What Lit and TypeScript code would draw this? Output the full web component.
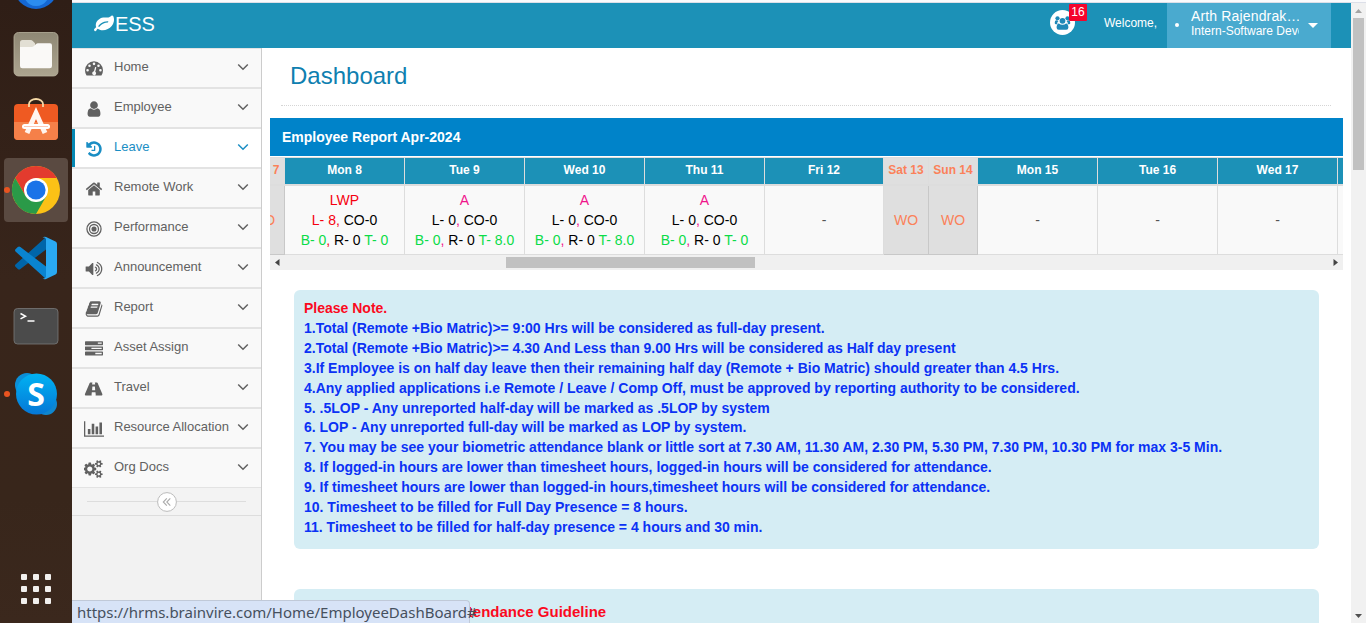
import { LitElement, html, css, svg, nothing } from "lit";
import { customElement } from "lit/decorators.js";
import { classMap } from "lit/directives/class-map.js";

const smallGear = (y: number) =>
  `M1856 ${y}v140q0 16-149 31-12 27-30 52 51 113 51 138 0 4-4 7-122 71-124 71-8 0-46-47t-52-68q-20 2-30 2t-30-2q-14 21-52 68t-46 47q-2 0-124-71-4-3-4-7 0-25 51-138-18-25-30-52-149-15-149-31v-140q0-16 149-31 13-29 30-52-51-113-51-138 0-4 4-7 4-2 35-20t59-34 30-16q8 0 46 46.5t52 67.5q20-2 30-2t30 2q51-71 92-112l6-2q4 0 124 70 4 3 4 7 0 25-51 138 17 23 30 52 149 15 149 31z`;

const ICONS: Record<string, { w: number; d: string }> = {
  gauge: {
    w: 1792,
    d: "M0 1024a896 896 0 0 1 1792 0q0 261-141 483-19 29-54 29H195q-35 0-54-29Q0 1286 0 1024zM256 896a128 128 0 1 0 0 256a128 128 0 1 0 0-256zM448 448a128 128 0 1 0 0 256a128 128 0 1 0 0-256zM896 256a128 128 0 1 0 0 256a128 128 0 1 0 0-256zM1344 448a128 128 0 1 0 0 256a128 128 0 1 0 0-256zM1536 896a128 128 0 1 0 0 256a128 128 0 1 0 0-256zM1073 698q-26-6-48 8t-29 39l-101 382q-60 5-107 43t-63 98q-20 77 20 146t117 89 146-20 89-117q16-60-6-117t-72-91l101-382q6-26-8-48t-39-30z",
  },
  user: {
    w: 1792,
    d: "M1536 1399q0 109-62.5 187t-150.5 78h-854q-88 0-150.5-78t-62.5-187q0-85 8.5-160.5t31.5-152 58.5-131 94-89 134.5-34.5q131 128 313 128t313-128q76 0 134.5 34.5t94 89 58.5 131 31.5 152 8.5 160.5zm-256-887q0 159-112.5 271.5t-271.5 112.5-271.5-112.5-112.5-271.5 112.5-271.5 271.5-112.5 271.5 112.5 112.5 271.5z",
  },
  history: {
    w: 1792,
    d: "M1664 896q0 156-61 298t-164 245-245 164-298 61q-172 0-327-72.5t-264-204.5q-7-10-6.5-22.5t8.5-20.5l137-138q10-9 25-9 16 2 23 12 73 95 179 147t225 52q104 0 198.5-40.5t163.5-109.5 109.5-163.5 40.5-198.5-40.5-198.5-109.5-163.5-163.5-109.5-198.5-40.5q-98 0-188 35.5t-160 101.5l137 138q31 30 14 69-17 40-59 40h-448q-26 0-45-19t-19-45v-448q0-42 40-59 39-17 69 14l130 129q107-101 244.5-156.5t284.5-55.5q156 0 298 61t245 164 164 245 61 298zm-640-288v448q0 14-9 23t-23 9h-320q-14 0-23-9t-9-23v-64q0-14 9-23t23-9h224v-352q0-14 9-23t23-9h64q14 0 23 9t9 23z",
  },
  home: {
    w: 1792,
    d: "M1472 992v480q0 26-19 45t-45 19h-384v-384h-256v384h-384q-26 0-45-19t-19-45v-480q0-1 .5-3t.5-3l575-474 575 474q1 2 1 6zm223-69l-62 74q-8 9-21 11h-3q-13 0-21-7l-692-577-692 577q-12 8-24 7-13-2-21-11l-62-74q-8-10-7-23.5t11-21.5l719-599q32-26 76-26t76 26l244 204v-195q0-14 9-23t23-9h192q14 0 23 9t9 23v408l219 182q10 8 11 21.5t-7 23.5z",
  },
  bullseye: {
    w: 1792,
    d: "M896 128a768 768 0 1 0 0 1536a768 768 0 1 0 0-1536zM896 256a640 640 0 1 1 0 1280a640 640 0 1 1 0-1280zM896 384a512 512 0 1 0 0 1024a512 512 0 1 0 0-1024zM896 512a384 384 0 1 1 0 768a384 384 0 1 1 0-768zM896 640a256 256 0 1 0 0 512a256 256 0 1 0 0-512z",
  },
  volume: {
    w: 1792,
    d: "M832 352v1088q0 26-19 45t-45 19-45-19l-333-333h-262q-26 0-45-19t-19-45v-384q0-26 19-45t45-19h262l333-333q19-19 45-19t45 19 19 45zm384 544q0 76-42.5 141.5t-112.5 93.5q-10 5-25 5-26 0-45-18.5t-19-45.5q0-21 12-35.5t29-25 34-23 29-36 12-56.5-12-56.5-29-36-34-23-29-25-12-35.5q0-27 19-45.5t45-18.5q15 0 25 5 70 27 112.5 93t42.5 142zm256 0q0 153-85 282.5t-225 188.5q-13 5-25 5-27 0-46-19t-19-45q0-39 39-59 56-29 76-44 74-54 115.5-135.5t41.5-173.5-41.5-173.5-115.5-135.5q-20-15-76-44-39-20-39-59 0-26 19-45t45-19q13 0 26 5 140 59 225 188.5t85 282.5zm256 0q0 230-127 422.5t-338 283.5q-13 5-26 5-26 0-45-19t-19-45q0-36 39-59 7-4 22.5-10.5t22.5-10.5q46-25 82-51 123-91 192-227t69-289-69-289-192-227q-36-26-82-51-7-4-22.5-10.5t-22.5-10.5q-39-23-39-59 0-26 19-45t45-19q13 0 26 5 211 91 338 283.5t127 422.5z",
  },
  book: {
    w: 1792,
    d: "M1703 478q40 57 18 129l-275 906q-19 64-76.5 107.5t-122.5 43.5h-923q-77 0-148.5-53.5t-99.5-131.5q-24-67-2-127 0-4 3-27t4-37q1-8-3-21.5t-3-19.5q2-11 8-21t16.5-23.5 16.5-23.5q23-38 45-91.5t30-91.5q3-10 .5-30t-.5-28q3-11 17-28t17-23q21-36 42-92t25-90q1-9-2.5-32t.5-28q4-13 22-30.5t22-22.5q19-26 42.5-84.5t27.5-96.5q1-8-3-25.5t-2-26.5q2-8 9-18t18-23 17-21q8-12 16.5-30.5t15-35 16-36 19.5-32 26.5-23.5 36-11.5 47.5 5.5l-1 3q38-9 51-9h761q74 0 114 56t18 130l-274 906q-36 119-71.5 153.5t-128.5 34.5h-869q-27 0-38 15-11 16-1 43 24 70 144 70h923q29 0 56-15.5t35-41.5l300-987q7-22 5-57 38 15 59 43zm-1064 2q-4 13 2 22.5t20 9.5h608q13 0 25.5-9.5t16.5-22.5l21-64q4-13-2-22.5t-20-9.5h-608q-13 0-25.5 9.5t-16.5 22.5zm-83 256q-4 13 2 22.5t20 9.5h608q13 0 25.5-9.5t16.5-22.5l21-64q4-13-2-22.5t-20-9.5h-608q-13 0-25.5 9.5t-16.5 22.5z",
  },
  tasks: {
    w: 1792,
    d: "M1024 1408h640v-128h-640v128zm-384-512h1024v-128h-1024v128zm640-512h384v-128h-384v128zm512 832v256q0 26-19 45t-45 19h-1664q-26 0-45-19t-19-45v-256q0-26 19-45t45-19h1664q26 0 45 19t19 45zm0-512v256q0 26-19 45t-45 19h-1664q-26 0-45-19t-19-45v-256q0-26 19-45t45-19h1664q26 0 45 19t19 45zm0-512v256q0 26-19 45t-45 19h-1664q-26 0-45-19t-19-45v-256q0-26 19-45t45-19h1664q26 0 45 19t19 45z",
  },
  road: {
    w: 1920,
    d: "M625 256h230q-13 0-22 9t-10 22l-12 128q-1 14 8 23t22 9h238q13 0 22-9t8-23l-12-128q-1-13-10-22t-22-9h230q36 0 60 36l470 1100q35 144-54 144h-634q13 0 22-9t8-23l-20-256q-1-13-11-22t-23-10H807q-13 0-23 10t-11 22l-20 256q-1 14 8 23t22 9H149q-89 0-54-144L565 292q24-36 60-36zM1111 1001l-24-324q-1-13-11-22t-23-9H867q-13 0-23 9t-11 22l-24 324q-1 28 29 28h244q30 0 29-28z",
  },
  chart: {
    w: 2048,
    d: "M640 896v512h-256v-512h256zm384-512v1024h-256v-1024h256zm1024 1152v128h-2048v-1536h128v1408h1920zm-640-896v768h-256v-768h256zm384-384v1152h-256v-1152h256z",
  },
  cogs: {
    w: 1920,
    d:
      "M832 896q0-106-75-181t-181-75-181 75-75 181 75 181 181 75 181-75 75-181zm768 512q0-52-38-90t-90-38-90 38-38 90q0 53 37.5 90.5t90.5 37.5 90.5-37.5 37.5-90.5zm0-1024q0-52-38-90t-90-38-90 38-38 90q0 53 37.5 90.5t90.5 37.5 90.5-37.5 37.5-90.5zm-384 421v185q0 10-7 19.5t-16 10.5l-155 24q-11 35-32 76 34 48 90 115 7 11 7 20 0 12-7 19-23 30-82.5 89.5t-78.5 59.5q-11 0-21-7l-115-90q-37 19-77 31-11 108-23 155-7 24-30 24h-186q-11 0-20-7.5t-10-17.5l-23-153q-34-10-75-31l-118 89q-7 7-20 7-11 0-21-8-144-133-144-160 0-9 7-19 10-14 41-53t47-61q-23-44-35-82l-152-24q-10-1-17-9.5t-7-19.5v-185q0-10 7-19.5t16-10.5l155-24q11-35 32-76-34-48-90-115-7-11-7-20 0-12 7-20 22-30 82-89t79-59q11 0 21 7l115 90q34-18 77-32 11-108 23-154 7-24 30-24h186q11 0 20 7.5t10 17.5l23 153q34 10 75 31l118-89q8-7 20-7 11 0 21 8 144 133 144 160 0 8-7 19-12 16-42 54t-45 60q23 48 34 82l152 23q10 2 17 10.5t7 19.5z" +
      smallGear(1338) +
      smallGear(314),
  },
  leaf: {
    w: 1792,
    d: "M1280 704q0-26-19-45t-45-19q-172 0-318 49.5t-259.5 134-235.5 219.5q-19 21-19 45 0 26 19 45t45 19q24 0 45-19 27-24 74-71t67-66q137-124 268.5-176t313.5-52q26 0 45-19t19-45zm512-198q0 95-20 193-46 224-184.5 383t-357.5 268q-214 108-438 108-148 0-286-47-15-5-88-42t-96-37q-16 0-39.5 32t-45 70-52.5 70-60 32q-43 0-63.5-17.5t-45.5-59.5q-2-4-6-11t-5.5-10-3-9.5-1.5-13.5q0-35 31-73.5t68-65.5 68-56 31-48q0-4-14-38t-16-44q-9-51-9-104 0-115 43.5-220t119-184.5 170.5-139 204-95.5q55-18 145-25.5t179.5-9 178.5-6 163.5-24 113.5-56.5l29.5-29.5 29.5-28 27-20 36.5-16 43.5-4.5q39 0 70.5 46t47.5 112 24 124 8 96z",
  },
};

const icon = (name: string, size: number) => {
  const i = ICONS[name];
  return html`<svg
    width=${(size * i.w) / 1792}
    height=${size}
    viewBox="0 0 ${i.w} 1792"
    fill="currentColor"
    fill-rule="evenodd"
  >
    <path d=${i.d}></path>
  </svg>`;
};

const DOCK = [
  {
    on: false,
    dot: false,
    art: svg`<circle cx="32" cy="33" r="22" fill="#1467d3"/><path d="M18 38q14 10 28 2q-4 12-14 12t-14-14z" fill="#2b8df0"/>`,
  },
  {
    on: false,
    dot: false,
    art: svg`<rect x="10" y="10.500" width="44" height="43.500" rx="4.500" fill="url(#files)" stroke="#b9b29e" stroke-width=".8"/>
      <path d="M16 20.500q0-2.500 2.500-2.500h8q1.500 0 2.500 1.200l2 2v6H16z" fill="#e2dfd4"/>
      <path d="M16 25h11.500q1.500 0 2.500-1l1.800-1.800q1-1 2.200-1h12q2 0 2 2.300V44q0 2.300-2.300 2.300H18.300Q16 46.300 16 44z" fill="#faf9f7"/>`,
  },
  {
    on: false,
    dot: false,
    art: svg`<rect x="10" y="14" width="44" height="36" rx="4" fill="#ef5a22"/>
      <path d="M10 32h44v14q0 4-4 4H14q-4 0-4-4z" fill="#f58049"/>
      <path d="M25 17v-3a7 5 0 0 1 14 0v3" fill="none" stroke="#f6d9a6" stroke-width="1.800"/>
      <path d="M23 43l9-20l9 20" fill="none" stroke="#fff4ef" stroke-width="5"/>
      <rect x="18" y="34" width="28" height="5" rx="2.500" fill="#fff"/><path d="M20 36.500h24" stroke="#ffc9b5" stroke-width="1"/>`,
  },
  {
    on: true,
    dot: true,
    art: svg`<circle cx="32" cy="32" r="24" fill="#fbc116"/>
      <path d="M11.200 20A24 24 0 0 1 52.800 20H32L21.600 38z" fill="#e33b2e"/>
      <path d="M11.200 20A24 24 0 0 0 32 56L42.400 38L32 44L21.600 38z" fill="#2a9a48"/>
      <circle cx="32" cy="32" r="12" fill="#fff"/><circle cx="32" cy="32" r="9.600" fill="#1a73e8"/>`,
  },
  {
    on: false,
    dot: false,
    art: svg`<path d="M42 11L11.500 38.500q-1 1.200 0 2.200l2.300 2.200q1.300 1 2.600 0L42 23.500z" fill="#0065a9"/>
      <path d="M42 53L11.500 25.500q-1-1.200 0-2.200l2.300-2.200q1.300-1 2.600 0L42 40.500z" fill="#0a84d0"/>
      <path d="M42 11l9.500 4.500q1.500.8 1.500 2.500v28q0 1.700-1.500 2.500L42 53q-2 .8-3.500-.8Q41 53 42 51V13q-1-2-3.500-1.200Q40 10.200 42 11z" fill="#2aa9f2"/>`,
  },
  {
    on: false,
    dot: false,
    art: svg`<rect x="10" y="14.500" width="44" height="35.500" rx="3.500" fill="#4b4b4b" stroke="#7a7a7a" stroke-width=".8"/>
      <path d="M16.500 19.500l5 2.700l-5 2.700M23.500 27h7" fill="none" stroke="#fff" stroke-width="1.500"/>`,
  },
  {
    on: false,
    dot: true,
    art: svg`<circle cx="23" cy="23" r="12" fill="#0b8fd8"/><circle cx="42" cy="42" r="11" fill="#0f86cf"/>
      <circle cx="32.500" cy="32" r="20.500" fill="url(#skype)"/>
      <text x="32" y="43.500" text-anchor="middle" font-family="Open Sans, sans-serif" font-weight="700" font-size="32" fill="#fff">S</text>`,
  },
];

const MENU: [string, string][] = [
  ["gauge", "Home"],
  ["user", "Employee"],
  ["history", "Leave"],
  ["home", "Remote Work"],
  ["bullseye", "Performance"],
  ["volume", "Announcement"],
  ["book", "Report"],
  ["tasks", "Asset Assign"],
  ["road", "Travel"],
  ["chart", "Resource Allocation"],
  ["cogs", "Org Docs"],
];

interface Day {
  label: string;
  width: number;
  off?: boolean;
  code?: string;
  leave?: string;
  total?: string;
}

const DAYS: Day[] = [
  { label: "Sun 7", width: 43, off: true },
  { label: "Mon 8", width: 120, code: "LWP", leave: "8", total: "0" },
  { label: "Tue 9", width: 120, code: "A", leave: "0", total: "8.0" },
  { label: "Wed 10", width: 120, code: "A", leave: "0", total: "8.0" },
  { label: "Thu 11", width: 120, code: "A", leave: "0", total: "0" },
  { label: "Fri 12", width: 119 },
  { label: "Sat 13", width: 45, off: true },
  { label: "Sun 14", width: 49, off: true },
  { label: "Mon 15", width: 120 },
  { label: "Tue 16", width: 120 },
  { label: "Wed 17", width: 120 },
  { label: "Thu 18", width: 120 },
];

const NOTES = [
  "1.Total (Remote +Bio Matric)>= 9:00 Hrs will be considered as full-day present.",
  "2.Total (Remote +Bio Matric)>= 4.30 And Less than 9.00 Hrs will be considered as Half day present",
  "3.If Employee is on half day leave then their remaining half day (Remote + Bio Matric) should greater than 4.5 Hrs.",
  "4.Any applied applications i.e Remote / Leave / Comp Off, must be approved by reporting authority to be considered.",
  "5. .5LOP - Any unreported half-day will be marked as .5LOP by system",
  "6. LOP - Any unreported full-day will be marked as LOP by system.",
  "7. You may be see your biometric attendance blank or little sort at 7.30 AM, 11.30 AM, 2.30 PM, 5.30 PM, 7.30 PM, 10.30 PM for max 3-5 Min.",
  "8. If logged-in hours are lower than timesheet hours, logged-in hours will be considered for attendance.",
  "9. If timesheet hours are lower than logged-in hours,timesheet hours will be considered for attendance.",
  "10. Timesheet to be filled for Full Day Presence = 8 hours.",
  "11. Timesheet to be filled for half-day presence = 4 hours and 30 min.",
];

@customElement("desktop-dock")
class DesktopDock extends LitElement {
  static styles = css`
    :host {
      display: flex;
      flex-direction: column;
      width: 72px;
      height: 623px;
      overflow: hidden;
      background: linear-gradient(#2f1e16, #38251b 45%, #38261b 80%, #3b281d);
    }
    .apps {
      display: flex;
      flex-direction: column;
      gap: 4px;
      margin: -46px 4px 0;
    }
    .app {
      position: relative;
      height: 64px;
      border-radius: 4px;
    }
    .on {
      background: #5a4a41;
    }
    .dot {
      position: absolute;
      left: 0;
      top: 29px;
      width: 6px;
      height: 6px;
      border-radius: 3px;
      background: #e95420;
    }
    .grid {
      display: grid;
      grid-template-columns: repeat(3, 6px);
      gap: 6px;
      margin: auto 21px 19px;
    }
    .grid i {
      height: 6px;
      border-radius: 1px;
      background: #f2f0ee;
    }
    svg {
      display: block;
    }
  `;
  render() {
    return html`
      <div class="apps">
        ${DOCK.map(
          (a) => html`<div class=${classMap({ app: true, on: a.on })}>
            <svg width="64" height="64" viewBox="0 0 64 64">
              <defs>
                <linearGradient id="files" x1="0" y1="0" x2="0" y2="1">
                  <stop offset="0" stop-color="#8f8875" />
                  <stop offset="1" stop-color="#aca48f" />
                </linearGradient>
                <linearGradient id="skype" x1="0" y1="0" x2="0" y2="1">
                  <stop offset="0" stop-color="#00b2f3" />
                  <stop offset="1" stop-color="#0577d6" />
                </linearGradient>
              </defs>
              ${a.art}
            </svg>
            ${a.dot ? html`<span class="dot"></span>` : nothing}
          </div>`
        )}
      </div>
      <div class="grid">${Array.from({ length: 9 }, () => html`<i></i>`)}</div>
    `;
  }
}

@customElement("top-bar")
class TopBar extends LitElement {
  static styles = css`
    :host {
      display: flex;
      height: 45px;
      background: #1c91b7;
      color: #fff;
      font: 12px "Liberation Sans", Arial, sans-serif;
    }
    .brand {
      display: flex;
      align-items: center;
      padding: 0 0 3px 22px;
      font-size: 20px;
      letter-spacing: -0.1px;
    }
    .brand span {
      margin-left: 1px;
    }
    .people {
      position: relative;
      width: 25px;
      height: 25px;
      margin: 7px 29px 0 auto;
      border-radius: 50%;
      background: #fff;
      color: #1e88b8;
    }
    .badge {
      position: absolute;
      left: 19px;
      top: -6px;
      width: 18px;
      height: 17px;
      background: #f4052c;
      color: #fff;
      line-height: 16px;
      text-align: center;
      border-radius: 1px;
    }
    .welcome {
      line-height: 40px;
      width: 63px;
    }
    .account {
      display: flex;
      align-items: center;
      width: 164px;
      margin-right: 20px;
      background: #4aaacf;
    }
    .bullet {
      width: 4px;
      height: 4px;
      margin: 0 12px 2px 8px;
      border-radius: 2px;
      background: #fff;
    }
    .who {
      width: 108px;
      height: 45px;
      padding-top: 11px;
      box-sizing: border-box;
      overflow: hidden;
      white-space: nowrap;
    }
    .name {
      font-size: 14px;
      line-height: 14px;
      margin-top: -5px;
      padding-bottom: 1px;
      letter-spacing: 0.15px;
    }
    .role {
      line-height: 14px;
    }
    .caret {
      margin: 0 0 1px 9px;
    }
    svg {
      display: block;
    }
  `;
  render() {
    return html`
      <div class="brand">${icon("leaf", 20)}<span>ESS</span></div>
      <div class="people">
        <svg width="25" height="25" viewBox="0 0 25 25" fill="currentColor">
          <circle cx="7.500" cy="8.300" r="2.100" />
          <circle cx="17.500" cy="8.300" r="2.100" />
          <path d="M8.500 11q-1.500 1-1.300 3.300H6Q4.700 14.300 4.700 13q0-3 1.600-2.800zM16.500 11q1.500 1 1.300 3.300H19q1.300 0 1.300-1.300 0-3-1.600-2.800z" />
          <circle cx="12.500" cy="10.800" r="2.900" />
          <path d="M8.900 13.400q1.500 1.400 3.600 1.400t3.600-1.400q2.300.2 2.300 4.100 0 2.200-2.100 2.200H8.700q-2.100 0-2.100-2.200 0-3.900 2.300-4.100z" />
        </svg>
        <span class="badge">16</span>
      </div>
      <div class="welcome">Welcome,</div>
      <div class="account">
        <span class="bullet"></span>
        <div class="who">
          <div class="name">Arth Rajendrak…</div>
          <div class="role">Intern-Software Developer</div>
        </div>
        <svg class="caret" width="10" height="5" viewBox="0 0 10 5" fill="#fff">
          <path d="M0 0h10L5 5z" />
        </svg>
      </div>
    `;
  }
}

@customElement("side-menu")
class SideMenu extends LitElement {
  static styles = css`
    :host {
      display: block;
      width: 190px;
      box-sizing: border-box;
      border-right: 1px solid #ccc;
      background: #f2f2f2;
      font: 13px "Liberation Sans", Arial, sans-serif;
      color: #616161;
    }
    .item {
      display: flex;
      align-items: center;
      height: 38px;
      border-top: 1px solid #e3e3e3;
      border-bottom: 1px solid #e3e3e3;
      background: #f9f9f9;
      padding-right: 12px;
    }
    .glyph {
      display: flex;
      justify-content: center;
      width: 44px;
      margin-top: 2px;
    }
    .label {
      flex: 1;
      padding: 0 0 3px;
      margin-left: -2px;
      white-space: nowrap;
    }
    .chevron {
      margin-bottom: 2px;
    }
    .active {
      background: #fff;
      color: #1a8ec4;
      box-shadow: inset 3px 0 0 #0588b3;
    }
    .collapse {
      display: flex;
      align-items: center;
      height: 27px;
      padding: 0 15px;
      border-bottom: 1px solid #ddd;
      background: #f3f3f3;
    }
    .rule {
      flex: 1;
      height: 1px;
      background: #ddd;
    }
    svg {
      display: block;
    }
  `;
  render() {
    return html`
      ${MENU.map(
        ([glyph, label]) => html`<div
          class=${classMap({ item: true, active: label === "Leave" })}
        >
          <span class="glyph">${icon(glyph, 18)}</span>
          <span class="label">${label}</span>
          <svg class="chevron" width="12" height="8" viewBox="0 0 12 8" fill="none" stroke="currentColor" stroke-width="1.500">
            <path d="M1.200 1.500L6 6.200L10.800 1.500" />
          </svg>
        </div>`
      )}
      <div class="collapse">
        <span class="rule"></span>
        <svg width="20" height="20" viewBox="0 0 20 20" fill="none">
          <circle cx="10" cy="10" r="9.400" fill="#fff" stroke="#bbb" />
          <path d="M9.800 6.300L6.300 10l3.500 3.700M13.300 6.300L9.800 10l3.500 3.700" stroke="#aaa" stroke-width="1.100" />
        </svg>
        <span class="rule"></span>
      </div>
    `;
  }
}

@customElement("attendance-report")
class AttendanceReport extends LitElement {
  static styles = css`
    :host {
      display: block;
      margin: 0 8px;
      overflow: hidden;
      font: 14px/20px "Liberation Sans", Arial, sans-serif;
    }
    .title {
      height: 38px;
      padding-left: 12px;
      background: #0083c9;
      color: #fff;
      font-weight: 700;
      line-height: 38px;
    }
    .view {
      margin-top: 1px;
      overflow: hidden;
      border-top: 1px solid #ddd;
    }
    .days {
      display: flex;
      margin-left: -28px;
    }
    .day {
      flex: none;
      text-align: center;
    }
    .head {
      box-sizing: border-box;
      height: 28px;
      border-right: 1px solid #ddd;
      border-bottom: 2px solid #ddd;
      background: #1c91b7;
      color: #fff;
      font-size: 12px;
      font-weight: 700;
      line-height: 24px;
    }
    .cell {
      display: flex;
      flex-direction: column;
      justify-content: center;
      box-sizing: border-box;
      height: 69px;
      border-right: 1px solid #ddd;
      border-bottom: 1px solid #ddd;
      background: #f9f9f9;
      color: #555;
      white-space: nowrap;
    }
    .off .head {
      background: #dfdfdf;
      color: #fb8159;
    }
    .off .cell {
      background: #dfdfdf;
      border-color: #c8c8c8;
      color: #fb8159;
    }
    .absent {
      color: #f0148c;
    }
    .unpaid {
      color: #f5000f;
    }
    .ink {
      color: #000;
    }
    .ok {
      color: #0bdc48;
    }
    .track {
      display: flex;
      align-items: center;
      justify-content: space-between;
      height: 15px;
      padding: 0 5px;
      background: #f0f0f0;
    }
    .thumb {
      width: 249px;
      height: 11px;
      margin-left: -353px;
      background: #c1c1c1;
    }
  `;
  render() {
    return html`
      <div class="title">Employee Report Apr-2024</div>
      <div class="view">
        <div class="days">
          ${DAYS.map((d) => {
            const unpaid = d.code === "LWP";
            return html`<div
              class=${classMap({ day: true, off: !!d.off })}
              style="width:${d.width}px"
            >
              <div class="head">${d.label}</div>
              <div
                class=${classMap({ cell: true, unpaid, absent: d.code === "A" })}
              >
                ${d.code
                  ? html`<div>${d.code}</div>
                      <div><span class=${unpaid ? "unpaid" : "ink"}>L- ${d.leave}</span>, <span class="ink">CO-0</span></div>
                      <div><span class="ok">B- 0</span>, <span class="ink">R- 0</span> <span class="ok">T- ${d.total}</span></div>`
                  : html`<div>${d.off ? "WO" : "-"}</div>`}
              </div>
            </div>`;
          })}
        </div>
      </div>
      <div class="track">
        <svg width="5" height="7" viewBox="0 0 5 7"><path d="M4.500 0v7L0 3.500z" fill="#444" /></svg>
        <span class="thumb"></span>
        <svg width="5" height="7" viewBox="0 0 5 7"><path d="M.5 0v7L5 3.500z" fill="#444" /></svg>
      </div>
    `;
  }
}

@customElement("app-root")
class AppRoot extends LitElement {
  static styles = css`
    :host {
      display: flex;
      position: relative;
      width: 1366px;
      height: 623px;
      overflow: hidden;
      background: #fff;
      font: 14px/20px "Liberation Sans", Arial, sans-serif;
    }
    .window {
      flex: 1;
      display: flex;
      flex-direction: column;
      min-width: 0;
    }
    .edge {
      flex: none;
      height: 2px;
      background: #fafafc;
      border-bottom: 1px solid #dcdfe8;
    }
    .frame {
      flex: 1;
      display: flex;
      min-height: 0;
    }
    .page {
      flex: 1;
      display: flex;
      flex-direction: column;
      min-width: 0;
    }
    .body {
      flex: 1;
      display: flex;
      min-height: 0;
    }
    .content {
      flex: 1;
      min-width: 0;
      overflow: hidden;
    }
    .heading {
      height: 57px;
      margin: 0 20px 12px 19px;
      padding-left: 9px;
      border-bottom: 1px dotted #d5d5d5;
      color: #0f7fb0;
      font-size: 24px;
      line-height: 56px;
      font-weight: 400;
    }
    .note {
      margin: 20px 32px 40px;
      padding: 9px 10px 10px;
      height: 240px;
      border-radius: 6px;
      background: #d5edf4;
      color: #0b32f5;
      font-weight: 700;
      line-height: 19.9px;
      white-space: nowrap;
    }
    .alert {
      color: #fb0a1e;
    }
    .guide {
      padding: 13px 0 0 158px;
      font-size: 15px;
    }
    .bar {
      display: flex;
      flex-direction: column;
      align-items: center;
      width: 15px;
      background: #f1f1f1;
    }
    .up {
      margin: 6px 0 5px;
    }
    .thumb {
      width: 11px;
      height: 152px;
      margin-top: 0;
      background: #c1c1c1;
    }
    .down {
      margin: auto 0 5px;
    }
    .status {
      position: absolute;
      left: 72px;
      bottom: 0;
      box-sizing: border-box;
      width: 398px;
      height: 23px;
      padding-left: 5px;
      border-top: 1px solid #c0c9d8;
      border-right: 1px solid #c0c9d8;
      border-radius: 0 4px 0 0;
      background: #d7e3f7;
      color: #46505e;
      font: 15px/22px "Noto Sans", sans-serif;
      white-space: nowrap;
    }
    svg {
      display: block;
    }
  `;
  render() {
    return html`
      <desktop-dock></desktop-dock>
      <div class="window">
        <div class="edge"></div>
        <div class="frame">
          <div class="page">
            <top-bar></top-bar>
            <div class="body">
              <side-menu></side-menu>
              <div class="content">
                <div class="heading">Dashboard</div>
                <attendance-report></attendance-report>
                <div class="note">
                  <div class="alert">Please Note.</div>
                  ${NOTES.map((n) => html`<div>${n}</div>`)}
                </div>
                <div class="note alert guide">Attendance Guideline</div>
              </div>
            </div>
          </div>
          <div class="bar">
            <svg class="up" width="7" height="4" viewBox="0 0 7 4"><path d="M0 4h7L3.500 0z" fill="#a3a3a3" /></svg>
            <span class="thumb"></span>
            <svg class="down" width="7" height="4" viewBox="0 0 7 4"><path d="M0 0h7L3.500 4z" fill="#505050" /></svg>
          </div>
        </div>
      </div>
      <div class="status">https://hrms.brainvire.com/Home/EmployeeDashBoard#</div>
    `;
  }
}
